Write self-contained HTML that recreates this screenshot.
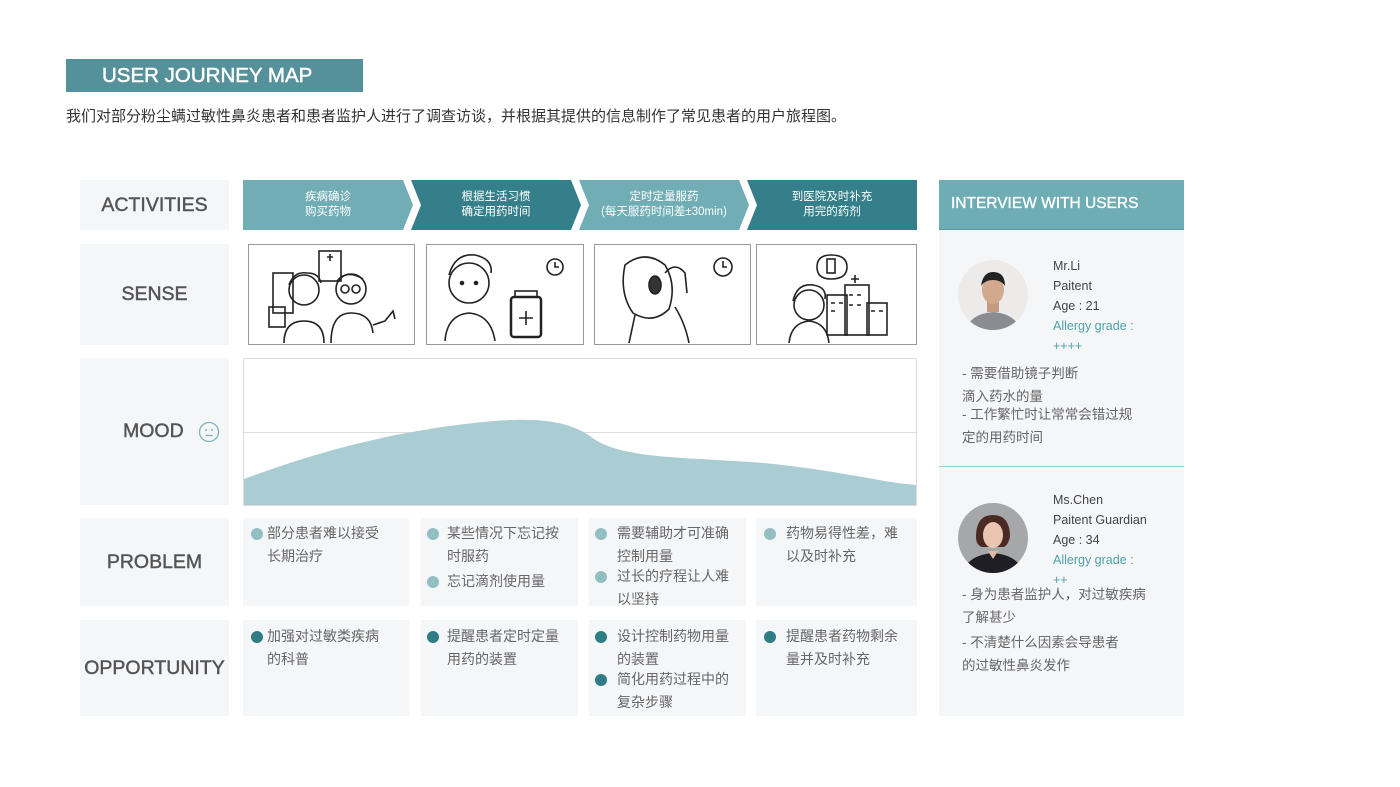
<!DOCTYPE html>
<html><head><meta charset="utf-8">
<style>
*{margin:0;padding:0;box-sizing:border-box}
body{width:1400px;height:787px;background:#fff;position:relative;overflow:hidden;font-family:"Liberation Sans","Noto Sans CJK SC",sans-serif;color:#666}
.a{position:absolute}
.lbl{background:#f5f6f8;color:#555;font-size:19.5px;font-family:"Liberation Sans",sans-serif;-webkit-text-stroke:0.45px #555;display:flex;align-items:center;justify-content:center}
.cell{background:#f5f6f8;font-size:14px;line-height:23px;color:#666;padding:4px 8px 0 8px}
.it{position:relative;padding-left:16px;margin-bottom:2px;max-width:140px}
.it:before{content:"";position:absolute;left:0;top:6px;width:12px;height:12px;border-radius:50%;background:#93bfc3}
.op .it:before{background:#2e7c84}
.arr{color:#fff;font-size:11.5px;line-height:15px;text-align:center;display:flex;align-items:center;justify-content:center}
.sk{border:1px solid #999;background:#fff}
.info{font-size:12.5px;line-height:20px;color:#444}
.txt{font-size:13.5px;line-height:23px;color:#666}
</style></head><body>
<div class="a" style="left:66px;top:59px;width:297px;height:33px;background:#55919a;color:#fff;font-size:20.5px;-webkit-text-stroke:0.5px #fff;line-height:33px;padding-left:36px">USER JOURNEY MAP</div>
<div class="a" style="left:66px;top:106px;font-size:15px;color:#333;line-height:22px">我们对部分粉尘螨过敏性鼻炎患者和患者监护人进行了调查访谈，并根据其提供的信息制作了常见患者的用户旅程图。</div>

<div class="a lbl" style="left:80px;top:180px;width:149px;height:50px">ACTIVITIES</div>
<div class="a lbl" style="left:80px;top:244px;width:149px;height:101px">SENSE</div>
<div class="a lbl" style="left:80px;top:358px;width:149px;height:147px;justify-content:flex-start;padding-left:43px">MOOD
<svg style="margin-left:14px" width="22" height="22" viewBox="0 0 22 22"><circle cx="11" cy="11" r="9.5" fill="none" stroke="#7fb4ba" stroke-width="1.3"/><circle cx="8" cy="9" r="1" fill="#7fb4ba"/><circle cx="14" cy="9" r="1" fill="#7fb4ba"/><line x1="7.5" y1="14.5" x2="14.5" y2="14.5" stroke="#7fb4ba" stroke-width="1.3"/></svg></div>
<div class="a lbl" style="left:80px;top:518px;width:149px;height:88px">PROBLEM</div>
<div class="a lbl" style="left:80px;top:620px;width:149px;height:96px">OPPORTUNITY</div>

<svg class="a" style="left:243px;top:180px" width="674" height="51">
<polygon points="0,0 160,0 170,25 160,50 0,50" fill="#70adb5"/>
<polygon points="168,0 328,0 338,25 328,50 168,50 178,25" fill="#347f89"/>
<polygon points="336,0 496,0 506,25 496,50 336,50 346,25" fill="#70adb5"/>
<polygon points="504,0 674,0 674,50 504,50 514,25" fill="#347f89"/>
</svg>
<div class="a arr" style="left:243px;top:180px;width:170px;height:50px">疾病确诊<br>购买药物</div>
<div class="a arr" style="left:416px;top:180px;width:160px;height:50px">根据生活习惯<br>确定用药时间</div>
<div class="a arr" style="left:584px;top:180px;width:160px;height:50px">定时定量服药<br>(每天服药时间差±30min)</div>
<div class="a arr" style="left:752px;top:180px;width:160px;height:50px">到医院及时补充<br>用完的药剂</div>

<div class="a sk" style="left:248px;top:244px;width:167px;height:101px">
<svg width="165" height="99" fill="none" stroke="#222" stroke-width="1.6"><rect x="70" y="6" width="22" height="30"/><path d="M78 12h6M81 9v7"/><rect x="24" y="28" width="20" height="40"/><rect x="20" y="62" width="16" height="20"/><circle cx="55" cy="45" r="15"/><path d="M40 40q5-14 18-12q12 0 14 10"/><path d="M35 98q0-22 20-22q20 0 20 22"/><circle cx="102" cy="44" r="15"/><circle cx="96" cy="44" r="4"/><circle cx="107" cy="44" r="4"/><path d="M88 36q10-12 26-2"/><path d="M82 98q0-30 20-30q20 0 22 20"/><path d="M124 80l12 -4 8 -10 2 8"/></svg></div>
<div class="a sk" style="left:426px;top:244px;width:158px;height:101px">
<svg width="156" height="99" fill="none" stroke="#222" stroke-width="1.6"><circle cx="42" cy="38" r="20"/><path d="M22 30q6-22 26-20q18 4 16 18"/><circle cx="35" cy="38" r="1.5" fill="#222"/><circle cx="49" cy="38" r="1.5" fill="#222"/><path d="M18 96q2-26 24-28q22 2 26 28"/><rect x="84" y="52" width="30" height="40" rx="3" stroke-width="2.5"/><rect x="88" y="46" width="22" height="6"/><path d="M99 66v14M92 73h14"/><circle cx="128" cy="22" r="8"/><path d="M128 17v5h4"/></svg></div>
<div class="a sk" style="left:594px;top:244px;width:157px;height:101px">
<svg width="155" height="99" fill="none" stroke="#222" stroke-width="1.6"><path d="M30 20q20-16 40 0q12 20 4 44q-16 16-36 4q-14-20-8-48z"/><ellipse cx="60" cy="40" rx="6" ry="9" fill="#333"/><path d="M70 28q10-12 20 0l2 20"/><path d="M40 70l-6 28M80 62q10 16 14 36"/><circle cx="128" cy="22" r="9"/><path d="M128 16v6h4"/></svg></div>
<div class="a sk" style="left:756px;top:244px;width:161px;height:101px">
<svg width="159" height="99" fill="none" stroke="#222" stroke-width="1.6"><path d="M60 22q0-12 14-12q16 0 16 12q0 12-16 12q-14 0-14-12z"/><rect x="70" y="14" width="8" height="14"/><circle cx="52" cy="60" r="15"/><path d="M36 56q4-18 20-16q14 2 12 14"/><path d="M32 98q2-20 20-22q18 2 20 22"/><rect x="70" y="50" width="20" height="40"/><rect x="88" y="40" width="24" height="50"/><rect x="110" y="58" width="20" height="32"/><path d="M98 30v8M94 34h8"/><path d="M74 58h4M82 58h4M74 66h4M92 50h4M100 50h4M92 60h4M100 60h4M114 66h4M122 66h4"/></svg></div>

<div class="a" style="left:243px;top:358px;width:674px;height:148px;border:1px solid #dcdcdc;background:#fff"></div>
<div class="a" style="left:244px;top:432px;width:672px;height:1px;background:#ddd"></div>
<svg class="a" style="left:244px;top:359px" width="672" height="146"><path d="M0 120 C80 90 160 70 250 62 C300 58 330 64 350 80 C380 100 440 98 520 104 C600 112 640 124 672 126 L672 146 L0 146Z" fill="#a9cdd2"/></svg>

<div class="a cell" style="left:243px;top:518px;width:166px;height:88px"><div class="it" style="max-width:132px">部分患者难以接受长期治疗</div></div>
<div class="a cell" style="left:421px;top:518px;width:157px;height:88px;padding-left:6px"><div class="it" style="padding-left:20px">某些情况下忘记按时服药</div><div class="it" style="padding-left:20px">忘记滴剂使用量</div></div>
<div class="a cell" style="left:589px;top:518px;width:157px;height:88px;padding-left:6px"><div class="it" style="padding-left:22px;margin-bottom:-3px">需要辅助才可准确控制用量</div><div class="it" style="padding-left:22px">过长的疗程让人难以坚持</div></div>
<div class="a cell" style="left:756px;top:518px;width:161px;height:88px"><div class="it" style="padding-left:22px;max-width:142px">药物易得性差，难以及时补充</div></div>

<div class="a cell op" style="left:243px;top:620px;width:166px;height:96px;padding-top:5px"><div class="it" style="max-width:132px">加强对过敏类疾病的科普</div></div>
<div class="a cell op" style="left:421px;top:620px;width:157px;height:96px;padding-top:5px;padding-left:6px"><div class="it" style="padding-left:20px">提醒患者定时定量用药的装置</div></div>
<div class="a cell op" style="left:589px;top:620px;width:157px;height:96px;padding-top:5px;padding-left:6px"><div class="it" style="padding-left:22px;margin-bottom:-3px">设计控制药物用量的装置</div><div class="it" style="padding-left:22px">简化用药过程中的复杂步骤</div></div>
<div class="a cell op" style="left:756px;top:620px;width:161px;height:96px;padding-top:5px"><div class="it" style="padding-left:22px;max-width:142px">提醒患者药物剩余量并及时补充</div></div>

<div class="a" style="left:939px;top:180px;width:245px;height:536px;background:#f5f6f8"></div>
<div class="a" style="left:939px;top:180px;width:245px;height:50px;background:#6fadb5;color:#fff;font-size:15.5px;-webkit-text-stroke:0.35px #fff;line-height:48px;padding-left:12px;border-bottom:1px solid #5b9aa2">INTERVIEW WITH USERS</div>
<svg class="a" style="left:958px;top:260px" width="70" height="70"><defs><clipPath id="c1"><circle cx="35" cy="35" r="35"/></clipPath></defs><g clip-path="url(#c1)"><rect width="70" height="70" fill="#ecebe9"/><path d="M8 70q4-16 27-18q23 2 27 18z" fill="#8a8c92"/><rect x="29" y="40" width="12" height="12" fill="#c49a80"/><ellipse cx="35" cy="30" rx="11" ry="14" fill="#d2a98e"/><path d="M23 26q2-14 12-14q12 0 12 14q-4-6-12-6q-8 0-12 6z" fill="#222"/></g></svg>
<div class="a info" style="left:1053px;top:256px">Mr.Li<br>Paitent<br>Age : 21<br><span style="color:#4fa1aa">Allergy grade :<br>++++</span></div>
<div class="a txt" style="left:962px;top:362px;width:210px">- 需要借助镜子判断<br>滴入药水的量</div>
<div class="a txt" style="left:962px;top:403px;width:210px">- 工作繁忙时让常常会错过规<br>定的用药时间</div>
<div class="a" style="left:939px;top:466px;width:245px;height:1px;background:#9cc9cf"></div>
<svg class="a" style="left:958px;top:503px" width="70" height="70"><defs><clipPath id="c2"><circle cx="35" cy="35" r="35"/></clipPath></defs><g clip-path="url(#c2)"><rect width="70" height="70" fill="#a5a7a9"/><path d="M4 70q6-18 31-20q25 2 31 20z" fill="#1e1e24"/><path d="M30 48l5 8 5-8z" fill="#e0b8a4"/><path d="M18 34q0-22 17-22q17 0 17 22q-2 8-6 10l-22 0q-6-2-6-10z" fill="#4a2a22"/><ellipse cx="35" cy="32" rx="10" ry="13" fill="#eac6b2"/></g></svg>
<div class="a info" style="left:1053px;top:490px">Ms.Chen<br>Paitent Guardian<br>Age : 34<br><span style="color:#4fa1aa">Allergy grade :<br>++</span></div>
<div class="a txt" style="left:962px;top:583px;width:210px">- 身为患者监护人，对过敏疾病<br>了解甚少</div>
<div class="a txt" style="left:962px;top:631px;width:210px">- 不清楚什么因素会导患者<br>的过敏性鼻炎发作</div>
</body></html>
